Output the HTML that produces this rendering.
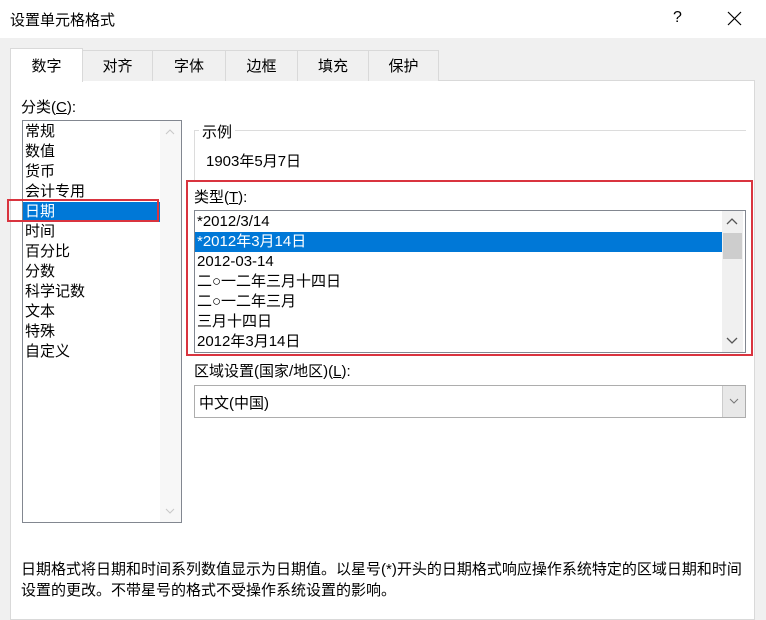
<!DOCTYPE html>
<html><head><meta charset="utf-8"><style>
*{margin:0;padding:0;box-sizing:border-box}
body{width:766px;height:609px;overflow:hidden;background:#f0f0f0;font-family:"Liberation Sans","Noto Sans CJK SC",sans-serif;font-size:15px;color:#000;position:relative}
.a{position:absolute;white-space:nowrap}
.title{left:0;top:0;width:766px;height:38px;background:#fff}
.tab{top:50px;height:31px;border:1px solid #d9d9d9;border-bottom:none;background:#f0f0f0;text-align:center;line-height:31px}
.panel{left:10px;top:80px;width:745px;height:540px;background:#fff;border:1px solid #d9d9d9}
.row{height:20px;line-height:20px;padding-left:2px}
</style></head><body>
<div class="a title"></div>
<div class="a" style="left:10px;top:9px;font-size:15px">设置单元格格式</div>
<div class="a" style="left:673px;top:9px;font-size:16px">?</div>
<svg class="a" style="left:727px;top:11px" width="15" height="15"><path d="M1 1L14 14M14 1L1 14" stroke="#000" stroke-width="1.2"/></svg>
<div class="a panel"></div>
<div class="a tab" style="left:82px;width:71px">对齐</div>
<div class="a tab" style="left:152px;width:74px">字体</div>
<div class="a tab" style="left:225px;width:73px">边框</div>
<div class="a tab" style="left:297px;width:72px">填充</div>
<div class="a tab" style="left:368px;width:71px">保护</div>
<div class="a tab" style="left:10px;top:48px;width:73px;height:34px;background:#fff;line-height:36px">数字</div>
<div class="a" style="left:21px;top:96px">分类(<u>C</u>):</div>
<div class="a" style="left:22px;top:120px;width:160px;height:403px;border:1px solid #828790;background:#fff"></div>
<div class="a" style="left:160px;top:121px;width:21px;height:401px;background:#f7f7f7"></div>
<svg class="a" style="left:165px;top:129px" width="10" height="6"><path d="M1 5L5 1L9 5" stroke="#c8c8c8" fill="none"/></svg>
<svg class="a" style="left:165px;top:508px" width="10" height="6"><path d="M1 1L5 5L9 1" stroke="#c8c8c8" fill="none"/></svg>
<div class="a" style="left:23px;top:122px;width:137px">
<div class="row">常规</div><div class="row">数值</div><div class="row">货币</div><div class="row">会计专用</div>
<div class="row" style="background:#0078d7;color:#fff">日期</div>
<div class="row">时间</div><div class="row">百分比</div><div class="row">分数</div><div class="row">科学记数</div><div class="row">文本</div><div class="row">特殊</div><div class="row">自定义</div></div>
<div class="a" style="left:7px;top:199px;width:152px;height:23px;border:2px solid #d9343f"></div>
<div class="a" style="left:194px;top:130px;width:552px;height:50px;border-top:1px solid #dcdcdc;border-left:1px solid #dcdcdc"></div>
<div class="a" style="left:199px;top:121px;background:#fff;padding:0 3px">示例</div>
<div class="a" style="left:206px;top:150px">1903年5月7日</div>
<div class="a" style="left:194px;top:186px">类型(<u>T</u>):</div>
<div class="a" style="left:194px;top:210px;width:552px;height:143px;border:1px solid #828790;background:#fff"></div>
<div class="a" style="left:722px;top:211px;width:21px;height:141px;background:#f0f0f0"></div>
<div class="a" style="left:723px;top:233px;width:19px;height:26px;background:#cdcdcd"></div>
<svg class="a" style="left:726px;top:217px" width="12" height="8"><path d="M1 7L6 2L11 7" stroke="#555" fill="none" stroke-width="1.3"/></svg>
<svg class="a" style="left:726px;top:337px" width="12" height="8"><path d="M1 1L6 6L11 1" stroke="#555" fill="none" stroke-width="1.3"/></svg>
<div class="a" style="left:195px;top:212px;width:527px">
<div class="row">*2012/3/14</div>
<div class="row" style="background:#0078d7;color:#fff">*2012年3月14日</div>
<div class="row">2012-03-14</div><div class="row">二○一二年三月十四日</div><div class="row">二○一二年三月</div><div class="row">三月十四日</div><div class="row">2012年3月14日</div></div>
<div class="a" style="left:186px;top:180px;width:567px;height:176px;border:2px solid #d9343f"></div>
<div class="a" style="left:194px;top:360px">区域设置(国家/地区)(<u>L</u>):</div>
<div class="a" style="left:194px;top:385px;width:552px;height:33px;border:1px solid #adadad;background:#fff"></div>
<div class="a" style="left:722px;top:386px;width:23px;height:31px;background:#e8e8e8;border-left:1px solid #ccc"></div>
<svg class="a" style="left:729px;top:398px" width="10" height="6"><path d="M1 1L5 5L9 1" stroke="#777" fill="none"/></svg>
<div class="a" style="left:199px;top:392px">中文(中国)</div>
<div class="a" style="left:21px;top:559px;font-size:15px;line-height:21px">日期格式将日期和时间系列数值显示为日期值。以星号(*)开头的日期格式响应操作系统特定的区域日期和时间<br>设置的更改。不带星号的格式不受操作系统设置的影响。</div>
</body></html>
